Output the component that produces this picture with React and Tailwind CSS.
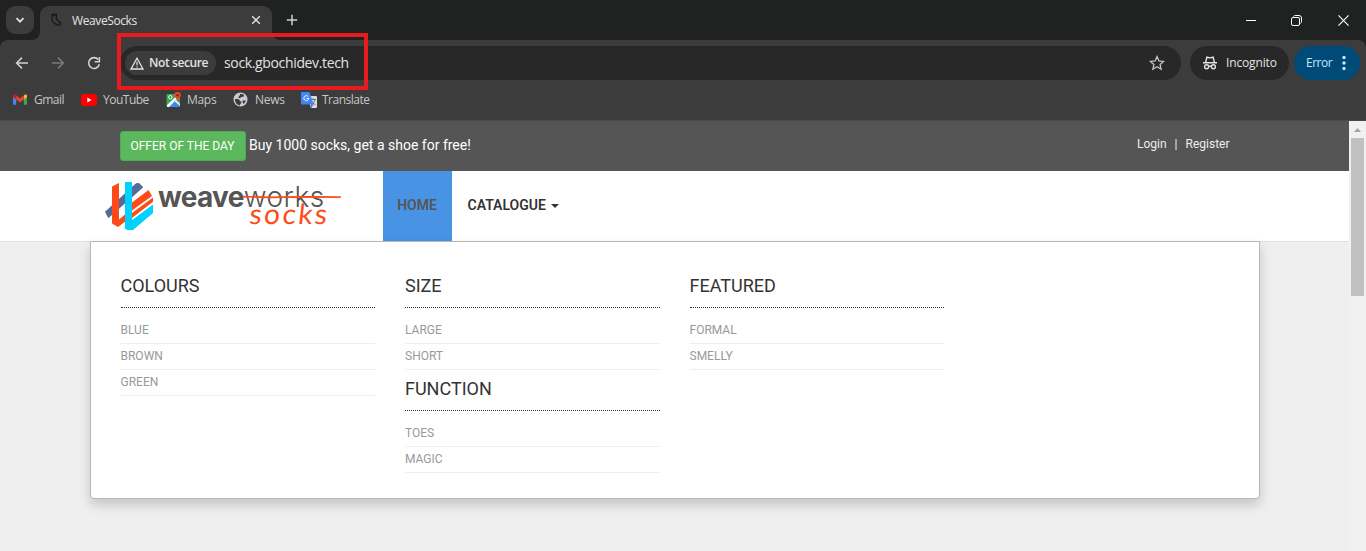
import React from "react";

const bookmarks = [
  {
    name: "Gmail",
    width: "w-[68px]",
    icon: (
      <svg viewBox="0 0 24 18" className="h-[11px] w-[14px] shrink-0">
        <path d="M0 3v13.5A1.5 1.5 0 0 0 1.5 18H5.5V8z" fill="#4285f4" />
        <path d="M24 3v13.5a1.5 1.5 0 0 1-1.5 1.5H18.5V8z" fill="#34a853" />
        <path d="M18.5 2v7L24 5V3c0-2.7-2.5-3-4-2z" fill="#fbbc04" />
        <path d="M5.500 9V2l6.500 5 6.500-5v7L12 14z" fill="#ea4335" />
        <path d="M5.500 2v7L0 5V3C0 .3 2.500 0 4 1z" fill="#c5221f" />
      </svg>
    ),
    gap: "gap-[7px]",
    spacing: "tracking-[-0.500px]",
  },
  {
    name: "YouTube",
    width: "w-[85px]",
    icon: (
      <svg viewBox="0 0 16 12" className="h-[12px] w-[16px] shrink-0">
        <rect width="16" height="12" rx="3" fill="#f00" />
        <path d="M6.300 3.500v5L10.600 6z" fill="#fff" />
      </svg>
    ),
    gap: "gap-[6px]",
    spacing: "tracking-[-0.500px]",
  },
  {
    name: "Maps",
    width: "w-[67px]",
    icon: (
      <svg viewBox="0 0 16 16" className="h-[16px] w-[16px] shrink-0">
        <rect x="0.500" y="2" width="13.500" height="13" rx="1" fill="#34a853" />
        <path d="M1.500 15 8 8.500l6 5.500v1z" fill="#4285f4" />
        <path d="M1 14.500V13L12 2.500l2 1.500L3 15H1.500z" fill="#fff" />
        <path d="M8 8.800 9.500 7.300l4.500 4.500V14z" fill="#e8eaed" />
        <circle cx="4.300" cy="5.200" r="1.700" fill="none" stroke="#fff" strokeWidth="0.900" />
        <path d="M11.500 0a3.300 3.300 0 0 0-3.300 3.300c0 2.200 2.700 3.200 3.300 6.400.6-3.200 3.300-4.200 3.300-6.400A3.300 3.300 0 0 0 11.500 0z" fill="#ea4335" />
        <circle cx="11.500" cy="3.300" r="1.200" fill="#8c1d18" />
      </svg>
    ),
    gap: "gap-[5px]",
    spacing: "tracking-[-0.300px]",
  },
  {
    name: "News",
    width: "w-[68px]",
    icon: (
      <svg viewBox="0 0 16 16" className="h-[15px] w-[15px] shrink-0">
        <circle cx="8" cy="8" r="7.500" fill="#c7cacf" />
        <path d="M2 7.500c2.500-.2 5 .1 5.200 1.600.1 1.200 2 .8 1.900 2.200-.1 1.100-1.600.9-1.800 3.200C4 14 2.200 11.500 2 7.500zM7.500 2.200c2.400-.3 3.800.5 4.500 1.300l-1 1.500-2.200.2-1 1.300-2-.2c0-2 1.700-1.500 1.700-4.100zM10 9.200l3.500-.4c-.1 1.700-1.200 3.100-2.600 4z" fill="#3c3c3c" />
      </svg>
    ),
    gap: "gap-[7px]",
    spacing: "tracking-[-0.300px]",
  },
  {
    name: "Translate",
    width: "w-[80px]",
    icon: (
      <svg viewBox="0 0 16 16" className="h-[16px] w-[16px] shrink-0">
        <path d="M6 4h9a1 1 0 0 1 1 1v10a1 1 0 0 1-1 1h-5z" fill="#dadce0" />
        <path d="M9.500 7.500H15M12 6.300v1.200M14 7.500c-.4 2-1.600 3.600-3.400 4.700M10.800 9.200c.6 1.400 1.800 2.700 3.600 3.500" stroke="#5f6368" fill="none" strokeWidth="0.900" />
        <path d="M1 0h7.500l4 12.500H1a1 1 0 0 1-1-1V1a1 1 0 0 1 1-1z" fill="#4285f4" />
        <path d="M10 12.500h2.500L10 16z" fill="#3367d6" />
        <path d="M7.300 4.700A2.500 2.500 0 1 0 7.800 6.500H5.400" stroke="#fff" strokeWidth="1" fill="none" />
      </svg>
    ),
    gap: "gap-[5px]",
    spacing: "tracking-[-0.500px]",
  },
];

function TabStrip() {
  return (
    <div className="flex h-[40px] bg-[#202221] text-[#e3e3e3]">
      <div className="ml-[6px] mt-[6px] flex h-[28px] w-[28px] items-center justify-center rounded-[9px] bg-[#3c3c3c]">
        <svg viewBox="0 0 10 10" className="h-[10px] w-[10px]">
          <path d="M1.500 3.200 5 6.700l3.500-3.500" fill="none" stroke="#e3e3e3" strokeWidth="1.700" />
        </svg>
      </div>
      <div className="relative ml-[6px] mt-[6px] flex h-[34px] w-[232px] rounded-t-[9px] bg-[#3c3c3c]">
        <svg viewBox="0 0 8 8" className="absolute bottom-0 -left-[8px] h-[8px] w-[8px]">
          <path d="M8 0v8H0a8 8 0 0 0 8-8z" fill="#3c3c3c" />
        </svg>
        <svg viewBox="0 0 8 8" className="absolute bottom-0 -right-[8px] h-[8px] w-[8px]">
          <path d="M0 0v8h8a8 8 0 0 1-8-8z" fill="#3c3c3c" />
        </svg>
        <svg viewBox="0 0 14 14" className="ml-[9px] mt-[7px] h-[14px] w-[14px] shrink-0">
          <path d="M3 1.200h4.500l-.2 5 3.900 3.200c1.300 1.200.2 3-1.500 2.800C7.500 12 5.500 10.400 3.200 8.300z" fill="#3c3c3c" stroke="#161616" strokeWidth="1.100" />
          <path d="M3 2.700h4.500M8.200 11.700l2.600-2.500" stroke="#161616" strokeWidth="0.900" />
        </svg>
        <span className="ml-[9px] mt-[6px] w-[179px] text-[12px] leading-[18px] tracking-[-0.400px]">WeaveSocks</span>
        <svg viewBox="0 0 10 10" className="mt-[9px] h-[10px] w-[10px] shrink-0">
          <path d="m1.200 1.200 7.600 7.600m0-7.600L1.200 8.800" stroke="#e3e3e3" strokeWidth="1.400" />
        </svg>
      </div>
      <svg viewBox="0 0 12 12" className="ml-[14px] mt-[14px] h-[12px] w-[12px]">
        <path d="M6 .8v10.400M.8 6h10.400" stroke="#d0d0d0" strokeWidth="1.500" />
      </svg>
      <div className="ml-auto mr-[17px] flex h-[40px] items-center gap-[36px] text-white">
        <svg viewBox="0 0 10 11" className="-mr-px h-[11px] w-[10px]">
          <path d="M0 5.500h10" stroke="currentColor" />
        </svg>
        <svg viewBox="0 0 11 11" className="h-[11px] w-[11px]" fill="none" stroke="currentColor">
          <rect x=".5" y="2.500" width="8" height="8" rx="1.500" />
          <path d="M2.500 1.500c.4-.8 1-1 1.700-1H8a2.500 2.500 0 0 1 2.500 2.500v3.500c0 1-.3 1.500-1 1.900" />
        </svg>
        <svg viewBox="0 0 10 10" className="h-[11px] w-[11px]">
          <path d="m.4.400 9.200 9.200m0-9.200L.4 9.600" stroke="currentColor" />
        </svg>
      </div>
    </div>
  );
}

function Toolbar() {
  return (
    <div className="flex h-[46px] items-start rounded-t-[8px] bg-[#3c3c3c] pt-[6px] text-[12px] text-[#e3e3e3]">
      <div className="flex h-[34px] w-[120px] items-center">
        <svg viewBox="0 0 14 14" className="ml-[15px] h-[14px] w-[14px]">
          <path d="M13 7H2M7 1.600 1.600 7 7 12.400" fill="none" stroke="#d2d2d2" strokeWidth="1.500" />
        </svg>
        <svg viewBox="0 0 14 14" className="ml-[22px] h-[14px] w-[14px]">
          <path d="M1 7h11M7 1.600 12.400 7 7 12.400" fill="none" stroke="#7b7b7b" strokeWidth="1.500" />
        </svg>
        <svg viewBox="0 0 14 14" className="ml-[22px] h-[14px] w-[14px]">
          <path d="M12.300 8.300A5.400 5.400 0 1 1 11.300 3.700" fill="none" stroke="#d2d2d2" strokeWidth="1.600" />
          <path d="M12.400 1v4.700H7.700" fill="none" stroke="#d2d2d2" strokeWidth="1.500" />
        </svg>
      </div>
      <div className="relative flex h-[34px] w-[1061px] items-center rounded-full bg-[#282828] pl-[5px]">
        <div className="flex h-[24px] w-[91px] items-center rounded-full bg-[#3c3c3c] pl-[5px]">
          <svg viewBox="0 0 14 13" className="h-[13px] w-[14px] shrink-0">
            <path d="M7 1.300 13 12H1z" fill="none" stroke="#e3e3e3" strokeWidth="1.300" />
            <path d="M7 4.800v3.500M7 9.200v1.400" stroke="#e3e3e3" strokeWidth="1.200" />
          </svg>
          <span className="ml-[5px] whitespace-nowrap font-semibold tracking-[-0.400px]">Not secure</span>
        </div>
        <span className="mb-[2px] ml-[8px] whitespace-nowrap text-[14px] tracking-[-0.350px]">sock.gbochidev.tech</span>
        <svg viewBox="0 0 16 16" className="ml-auto mr-[16px] h-[16px] w-[16px]">
          <path d="m8 1.600 1.900 4.300 4.700.5-3.500 3.100 1 4.700L8 11.800l-4.100 2.400 1-4.700L1.400 6.400l4.700-.5z" fill="none" stroke="#c7c7c7" strokeWidth="1.300" />
        </svg>
        <div className="absolute -left-[3px] -top-[13px] h-[57px] w-[251px] border-4 border-[#e81c1c]" />
      </div>
      <div className="ml-[9px] flex h-[34px] w-[99px] items-center rounded-full bg-[#282828] pl-[12px]">
        <svg viewBox="0 0 16 16" className="h-[16px] w-[16px]" fill="none" stroke="#e3e3e3" strokeWidth="1.400">
          <path d="M1 7.800h14M3.600 7.500l1.300-5.300 3.100.7 3.100-.7 1.300 5.300" />
          <circle cx="4.600" cy="11.700" r="2" />
          <circle cx="11.400" cy="11.700" r="2" />
          <path d="M6.600 11.400c.9-.6 1.900-.6 2.800 0" />
        </svg>
        <span className="ml-[8px] tracking-[-0.150px]">Incognito</span>
      </div>
      <div className="ml-[5px] flex h-[34px] w-[66px] items-center rounded-full bg-[#004a77] pl-[12px] text-[#c2e7ff]">
        <span className="w-[36px] tracking-[-0.500px]">Error</span>
        <svg viewBox="0 0 4 16" className="h-[16px] w-[4px]" fill="currentColor">
          <circle cx="2" cy="2.500" r="1.700" />
          <circle cx="2" cy="8" r="1.700" />
          <circle cx="2" cy="13.500" r="1.700" />
        </svg>
      </div>
    </div>
  );
}

function BookmarksBar() {
  return (
    <div className="flex h-[35px] border-b border-[#4a4a4a] bg-[#3c3c3c] pb-[7px] pl-[13px] text-[12px] text-[#c7c7c7]">
      {bookmarks.map((b) => (
        <div key={b.name} className={`flex items-center ${b.gap} ${b.width}`}>
          {b.icon}
          <span className={`whitespace-nowrap ${b.spacing}`}>{b.name}</span>
        </div>
      ))}
    </div>
  );
}

function Logo() {
  return (
    <div className="relative h-[70px] w-[293px]">
      <svg viewBox="0 0 48 48" className="absolute left-[15px] top-[11px] h-[48px] w-[48px]">
        <path d="M0 29.700 31 1.300 34 1l4.300 4.300L3.300 36.300z" fill="#566b98" />
        <path d="M7 4.500 14 1v36.500l6-5v7.200l-7 5.300-6-3.500z" fill="#ff4b19" />
        <path d="M27 20.500 43.500 8l3.500 6-20 14.500z" fill="#ff4b19" />
        <path d="M27 31 48 15.500v4.200L27 36z" fill="#ff4b19" />
        <path d="M20 0h7v38l21-15.500V31L28 48h-6l-2-1.500z" fill="#00d2ff" />
      </svg>
      <div className="absolute left-[68px] top-[9px] flex whitespace-nowrap font-['Inter',sans-serif] text-[28px] leading-[34px] text-[#555]">
        <span className="font-bold tracking-[-0.700px]">weave</span>
        <span className="font-light tracking-[0.500px]">works</span>
      </div>
      <svg viewBox="0 0 100 6" className="absolute left-[152px] top-[23px] h-[6px] w-[100px]">
        <path d="M1 3c15-1 22 1 37 .2S70 3 99 3" stroke="#ff4b19" strokeWidth="1.700" fill="none" />
        <path d="M1 2.200c30 2 60 .8 96 1.400" stroke="#ff4b19" strokeWidth="0.800" fill="none" />
      </svg>
      <span className="absolute left-[160px] top-[27px] -skew-x-6 font-['Lato',sans-serif] text-[28px] font-normal leading-[30px] tracking-[2.400px] text-[#ff4b19]">socks</span>
    </div>
  );
}

function MenuSection({ title, items }) {
  return (
    <section>
      <h3 className="mt-[9px] border-b border-dotted border-[#333] pb-[11px] text-[18px] leading-[20px] text-[#333]">{title}</h3>
      <ul className="mt-[10px]">
        {items.map((item) => (
          <li key={item} className="h-[26px] border-b border-[#eee] text-[12px] leading-[24px] text-[#999]">{item}</li>
        ))}
      </ul>
    </section>
  );
}

export default function App() {
  return (
    <div className="h-[551px] w-[1366px] overflow-hidden bg-[#202221] font-['Open_Sans','Noto_Sans',sans-serif]">
      <TabStrip />
      <Toolbar />
      <BookmarksBar />
      <div className="flex h-[430px] font-['Roboto',sans-serif]">
        <main className="w-[1349px] bg-[#efefef]">
          <div className="flex h-[50px] bg-[#555] pl-[120px] pr-[119.5px] text-white">
            <div className="mt-[10px] flex h-[30px] w-[126px] items-center justify-center rounded-[3px] border border-[#4cae4c] bg-[#5cb85c] pr-px text-[12px]">OFFER OF THE DAY</div>
            <span className="ml-[3px] mt-[14px] text-[14px] leading-[20px]">Buy 1000 socks, get a shoe for free!</span>
            <div className="ml-auto mt-[13px] flex gap-[8px] text-[12px] leading-[20px] text-[#eee]">
              <span>Login</span>
              <span>|</span>
              <span>Register</span>
            </div>
          </div>
          <nav className="flex h-[70px] bg-white pl-[90px] text-[14px] font-semibold text-[#333]">
            <Logo />
            <div className="flex h-[70px] w-[69px] items-center justify-center bg-[#4993e4] pb-[2px] pr-px text-[#555]">HOME</div>
            <div className="ml-[15.5px] flex items-center pb-[2px]">
              CATALOGUE
              <svg viewBox="0 0 8 4" className="ml-[5.5px] mt-[2px] h-[4px] w-[8px]">
                <path d="M0 0h8L4 4z" fill="#333" />
              </svg>
            </div>
          </nav>
          <div className="border-t border-[#e0e0e0]">
            <div className="relative -mt-px ml-[90px] grid h-[258px] w-[1170px] grid-cols-[254.5px_254.5px_254.5px] content-start gap-x-[30px] rounded-b-[4px] border border-[#b8b8b8] bg-white pl-[29.5px] pt-[25px] shadow-[0_6px_12px_rgba(0,0,0,0.175)]">
              <MenuSection title="COLOURS" items={["BLUE", "BROWN", "GREEN"]} />
              <div>
                <MenuSection title="SIZE" items={["LARGE", "SHORT"]} />
                <MenuSection title="FUNCTION" items={["TOES", "MAGIC"]} />
              </div>
              <MenuSection title="FEATURED" items={["FORMAL", "SMELLY"]} />
            </div>
          </div>
        </main>
        <aside className="w-[17px] bg-[#f1f1f1]">
          <svg viewBox="0 0 17 17" className="h-[17px] w-[17px]">
            <path d="M5 11h7L8.500 7z" fill="#a3a3a3" />
          </svg>
          <div className="ml-[2px] h-[158px] w-[13px] bg-[#c1c1c1]" />
        </aside>
      </div>
    </div>
  );
}
